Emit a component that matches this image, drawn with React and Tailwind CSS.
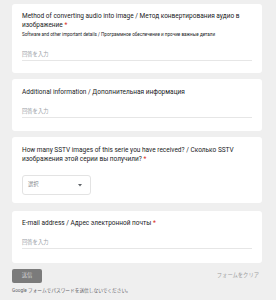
export default function App() {
  const font = { fontFamily: "Roboto, 'Noto Sans CJK JP', sans-serif" };
  return (
    <div
      className="w-[276px] h-[300px] bg-[#efefef] overflow-hidden px-3 pt-1 text-[#202124]"
      style={font}
    >
      <div className="flex flex-col w-[250px]">
        {/* Q1 */}
        <div className="bg-white rounded-[3px] h-[69px] px-[10px] pt-[8px]">
          <div className="text-[6.5px] leading-[9px]">
            Method of converting audio into image / Метод конвертирования аудио в изображение{" "}
            <span className="text-[#d93025]">*</span>
          </div>
          <div className="text-[4.6px] leading-[6px] mt-[2px]">
            Software and other important details / Программное обеспечение и прочие важные детали
          </div>
          <div className="mt-[13px] text-[5.3px] leading-[7px] text-[#9aa0a6] border-b border-[#e6e6e6] pb-[2px]">
            回答を入力
          </div>
        </div>

        {/* Q2 */}
        <div className="bg-white rounded-[3px] h-[52px] px-[10px] pt-[9px] mt-[6px]">
          <div className="text-[6.5px] leading-[9px]">
            Additional information / Дополнительная информация
          </div>
          <div className="mt-[11px] text-[5.3px] leading-[7px] text-[#9aa0a6] border-b border-[#e6e6e6] pb-[2px]">
            回答を入力
          </div>
        </div>

        {/* Q3 */}
        <div className="bg-white rounded-[3px] h-[66px] px-[10px] pt-[9px] mt-[6px]">
          <div className="text-[6.5px] leading-[9px]">
            How many SSTV images of this serie you have received? / Сколько SSTV изображения этой серии вы получили?{" "}
            <span className="text-[#d93025]">*</span>
          </div>
          <div className="mt-[11px] w-[69px] h-[20px] border border-[#e3e3e3] rounded-[3px] flex items-center justify-between pl-[5px] pr-[8px]">
            <span className="text-[5.3px] text-[#80868b]">選択</span>
            <svg width="4" height="3" viewBox="0 0 4 3">
              <path d="M0 0 L4 0 L2 2.4 Z" fill="#5f6368" />
            </svg>
          </div>
        </div>

        {/* Q4 */}
        <div className="bg-white rounded-[3px] h-[52px] px-[10px] pt-[8px] mt-[8px]">
          <div className="text-[6.5px] leading-[9px]">
            E-mail address / Адрес электронной почты{" "}
            <span className="text-[#d93025]">*</span>
          </div>
          <div className="mt-[11px] text-[5.3px] leading-[7px] text-[#9aa0a6] border-b border-[#e6e6e6] pb-[2px]">
            回答を入力
          </div>
        </div>

        {/* actions */}
        <div className="flex items-center justify-between mt-[6px]">
          <div className="w-[30px] h-[14px] bg-[#7b7b7b] rounded-[2px] flex items-center justify-center text-[5.3px] text-[#d6d6d6]">
            送信
          </div>
          <div className="text-[5.3px] text-[#9e9e9e] pr-[3px]">フォームをクリア</div>
        </div>
        <div className="mt-[5px] text-[4.7px] leading-[6px] text-[#5f6368]">
          Google フォームでパスワードを送信しないでください。
        </div>
      </div>
    </div>
  );
}
